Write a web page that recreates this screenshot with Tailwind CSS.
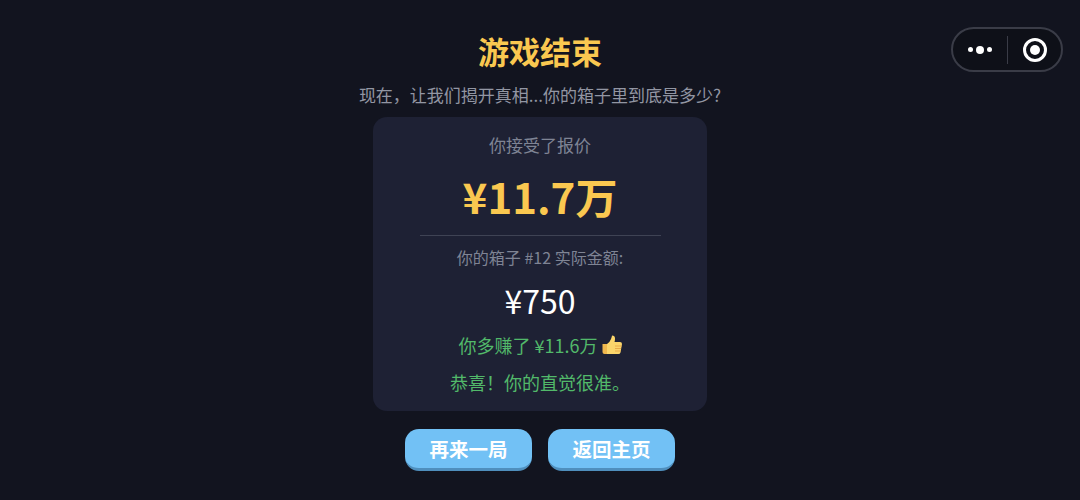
<!DOCTYPE html>
<html lang="zh-CN">
<head>
  <meta charset="UTF-8" />
  <title>游戏结束</title>
  <script src="https://cdn.jsdelivr.net/npm/@tailwindcss/browser@4"></script>
</head>
<body class="bg-[#12141f] font-['Noto_Sans_CJK_SC','Noto_Sans',sans-serif]">
  <div class="relative w-[1080px] h-[500px] overflow-hidden flex flex-col items-center pt-[29px]">

    <!-- WeChat capsule -->
    <div class="absolute left-[951px] top-[27px] w-[112px] h-[45px] rounded-full border-2 border-[#3a3c47] bg-[#0e1018] flex items-center">
      <div class="w-[53px] flex items-center justify-center gap-[3px]">
        <span class="w-[5px] h-[5px] rounded-full bg-white"></span>
        <span class="w-[8px] h-[8px] rounded-full bg-white"></span>
        <span class="w-[5px] h-[5px] rounded-full bg-white"></span>
      </div>
      <div class="ml-px w-px h-[28px] bg-[#3a3c47]"></div>
      <div class="flex-1 flex items-center justify-center">
        <div class="w-[24px] h-[24px] rounded-full border-[3px] border-white flex items-center justify-center">
          <span class="w-[10px] h-[10px] rounded-full bg-white"></span>
        </div>
      </div>
    </div>

    <h1 class="text-[31px] leading-[44px] font-bold text-[#fac850]">游戏结束</h1>
    <p class="mt-[2px] text-[17px] leading-[40px] h-[42px] text-[#9296a3]">现在，让我们揭开真相...你的箱子里到底是多少?</p>

    <!-- Result card -->
    <section class="w-[334px] h-[294px] rounded-[14px] bg-[#1e2134] flex flex-col items-center pt-[14px]">
      <p class="text-[17px] leading-[28px] text-[#7f8494]">你接受了报价</p>
      <p class="mt-[7px] text-[42px] leading-[60px] font-bold text-[#fac850]">¥11.7万</p>
      <div class="mt-[9px] w-[241px] h-px bg-[#3f4354]"></div>
      <p class="mt-[8px] text-[16px] leading-[26px] text-[#7f8494]">你的箱子 #12 实际金额:</p>
      <p class="mt-[7px] text-[32px] leading-[46px] text-white">¥750</p>
      <p class="mt-[7px] text-[18px] leading-[30px] text-[#52b96a] flex items-center gap-[4px]">
        你多赚了 ¥11.6万
        <svg width="20" height="20" viewBox="0 0 20 20">
          <path d="M0.500 9h4.500v10H2.500q-2 0-2-2z" fill="#f0b84e" />
          <path d="M5 9q3-2 4-5t1-3.500q3 0 3 3 0 2-.5 3.500h5.500q2 0 2 2l-1.500 8.500q-.5 1.500-2 1.500H5z" fill="#fbd56b" />
          <path d="M13 11h6.500M13 13.500h6M13 16h5.500" stroke="#e9a94a" stroke-width="1" />
        </svg>
      </p>
      <p class="mt-[7px] text-[18px] leading-[30px] text-[#52b96a]">恭喜！你的直觉很准。</p>
    </section>

    <!-- Actions -->
    <div class="mt-[18px] flex gap-[16px]">
      <button class="w-[127px] h-[42px] rounded-[14px] bg-[#72c1f5] border-b-[3px] border-[#4f8fbd] text-[19.500px] font-bold text-white">再来一局</button>
      <button class="w-[127px] h-[42px] rounded-[14px] bg-[#72c1f5] border-b-[3px] border-[#4f8fbd] text-[19.500px] font-bold text-white">返回主页</button>
    </div>
  </div>
</body>
</html>
